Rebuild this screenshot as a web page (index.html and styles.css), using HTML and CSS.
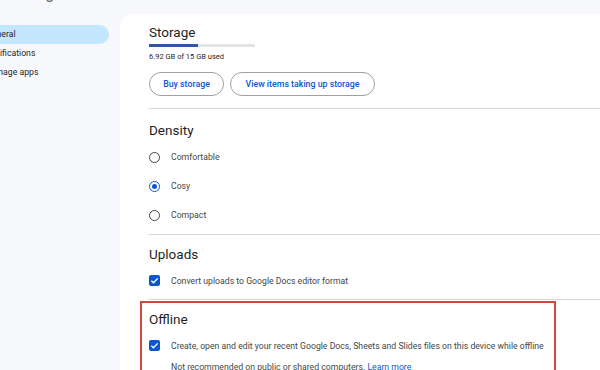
FILE: index.html
```html
<!DOCTYPE html>
<html lang="en">
<head>
<meta charset="utf-8">
<title>Settings</title>
<link rel="stylesheet" href="styles.css">
</head>
<body>
<div class="app">
  <header class="top">Settings</header>
  <div class="layout">
    <nav class="side">
      <a class="nav-item active">General</a>
      <a class="nav-item">Notifications</a>
      <a class="nav-item">Manage apps</a>
    </nav>
    <main class="card">
      <section class="sec storage">
        <h2>Storage</h2>
        <div class="bar"><div class="fill" style="width:46%"></div></div>
        <p class="meta">6.92 GB of 15 GB used</p>
        <div class="btns">
          <button class="btn btn-buy">Buy storage</button>
          <button class="btn btn-view">View items taking up storage</button>
        </div>
      </section>
      <section class="sec density">
        <h2>Density</h2>
        <label class="opt"><span class="radio"></span>Comfortable</label>
        <label class="opt"><span class="radio on"></span>Cosy</label>
        <label class="opt"><span class="radio"></span>Compact</label>
      </section>
      <section class="sec uploads">
        <h2>Uploads</h2>
        <label class="check-row"><span class="check"><svg viewBox="0 0 12 12"><path d="M2.6 6.2l2.3 2.3 4.6-4.8" fill="none" stroke="#fff" stroke-width="1.5"/></svg></span>Convert uploads to Google Docs editor format</label>
      </section>
      <section class="sec offline">
        <div class="highlight"></div>
        <h2>Offline</h2>
        <label class="check-row"><span class="check"><svg viewBox="0 0 12 12"><path d="M2.6 6.2l2.3 2.3 4.6-4.8" fill="none" stroke="#fff" stroke-width="1.5"/></svg></span>Create, open and edit your recent Google Docs, Sheets and Slides files on this device while offline</label>
        <p class="note">Not recommended on public or shared computers. <a class="link">Learn more</a></p>
      </section>
    </main>
  </div>
</div>
</body>
</html>
```
FILE: styles.css
```css
* { box-sizing: border-box; }
html, body { margin: 0; padding: 0; }
body {
  background: #f6f8fc;
  font-family: Roboto, "Liberation Sans", sans-serif;
  color: #1f1f1f;
  width: 600px;
  height: 370px;
  overflow: hidden;
}
.app {
  margin: -14px 0 0 -40px;
}
.top {
  height: 28px;
  padding-left: 44px;
  font-size: 16px;
  line-height: 16px;
  color: #5f6368;
}
.layout {
  display: flex;
}
.side {
  width: 160px;
  flex: none;
  padding-top: 11px;
  display: flex;
  flex-direction: column;
}
.nav-item {
  display: block;
  height: 19px;
  line-height: 19px;
  padding-left: 26px;
  margin-right: 11px;
  font-size: 8.7px;
  color: #1f1f1f;
  border-radius: 0 10px 10px 0;
}
.nav-item.active {
  background: #c2e7ff;
}
.card {
  flex: 1;
  background: #fff;
  border-radius: 14px 0 0 0;
  padding: 9px 0 0 28px;
  min-height: 420px;
}
.sec {
  position: relative;
  border-bottom: 1px solid #d6d8db;
  padding-left: 1px;
}
h2 {
  margin: 0;
  font-weight: 400;
  font-size: 13.5px;
  line-height: 18px;
  color: #1f1f1f;
}
.bar {
  width: 106px;
  height: 2.5px;
  background: #e3e3e3;
  margin-top: 3px;
}
.fill {
  height: 100%;
  background: #2f55a4;
}
.meta {
  margin: 5px 0 0;
  font-size: 7.5px;
  line-height: 10px;
  color: #1f1f1f;
}
.btns {
  display: flex;
  gap: 6px;
  margin-top: 10px;
  padding-bottom: 12px;
}
.btn {
  height: 24px;
  border: 1px solid #9aa0a6;
  border-radius: 12px;
  background: #fff;
  font-family: Roboto, "Liberation Sans", sans-serif;
  font-size: 8.8px;
  font-weight: 500;
  color: #0b57d0;
  padding: 0;
}
.btn-buy { width: 75px; }
.btn-view { width: 145px; }
.density { padding-top: 12px; padding-bottom: 4px; }
.density h2 { margin-bottom: 4px; }
.opt {
  display: flex;
  align-items: center;
  height: 29px;
  font-size: 8.7px;
  color: #444746;
}
.radio {
  width: 11px;
  height: 11px;
  border: 1.3px solid #444746;
  border-radius: 50%;
  margin: 0 11px 0 0;
  position: relative;
  flex: none;
}
.radio.on {
  border-color: #0b57d0;
}
.radio.on::after {
  content: "";
  position: absolute;
  inset: 2px;
  border-radius: 50%;
  background: #0b57d0;
}
.uploads { padding-top: 10px; padding-bottom: 11px; }
.uploads h2 { margin-bottom: 11px; }
.check-row {
  display: flex;
  align-items: center;
  height: 14px;
  font-size: 8.7px;
  color: #444746;
}
.check {
  width: 11px;
  height: 11px;
  background: #0b57d0;
  border-radius: 2px;
  margin-right: 11px;
  flex: none;
  display: flex;
}
.check svg { width: 11px; height: 11px; }
.offline { padding-top: 10px; border-bottom: none; }
.offline h2 { margin-bottom: 11px; }
.note {
  margin: 9px 0 0 22px;
  font-size: 8.7px;
  line-height: 10px;
  color: #444746;
}
.link { color: #0b57d0; }
.highlight {
  position: absolute;
  left: -8px;
  top: 1px;
  width: 416px;
  height: 120px;
  border: 2px solid #d2483d;
  pointer-events: none;
}
```
